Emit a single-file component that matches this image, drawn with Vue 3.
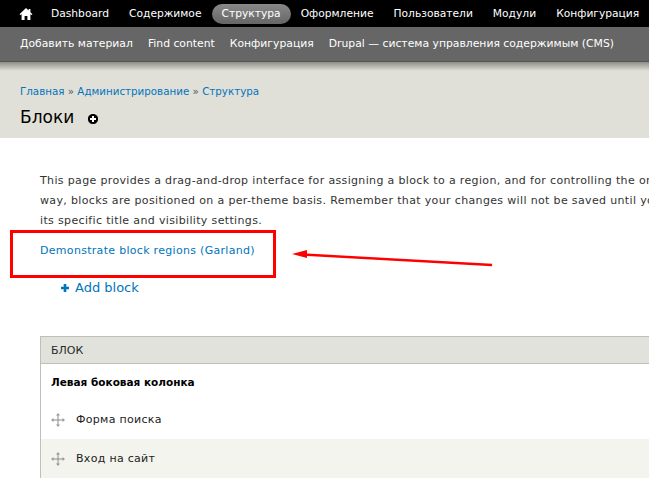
<script setup>
const topItems = [
  { label: 'Dashboard' },
  { label: 'Содержимое' },
  { label: 'Структура', active: true },
  { label: 'Оформление' },
  { label: 'Пользователи' },
  { label: 'Модули' },
  { label: 'Конфигурация' },
]
const shortcuts = ['Добавить материал', 'Find content', 'Конфигурация', 'Drupal — система управления содержимым (CMS)']
const rows = [
  { label: 'Форма поиска', even: false },
  { label: 'Вход на сайт', even: true },
]
</script>

<template>
  <div class="page">
    <nav class="toolbar">
      <svg class="home" width="16" height="14" viewBox="0 0 16 14">
        <path d="M8 1 L1.5 7.2 L2.6 8 L3.6 7.2 V13 H6.6 V9 H9.4 V13 H12.4 V7.2 L13.4 8 L14.5 7.2 L12.4 5.2 V2 H10.6 V3.5 Z" fill="#fff" />
      </svg>
      <a v-for="item in topItems" :key="item.label" class="top-link" :class="{ active: item.active }">{{ item.label }}</a>
    </nav>
    <nav class="shortcuts">
      <a v-for="s in shortcuts" :key="s" class="shortcut">{{ s }}</a>
    </nav>
    <header class="head">
      <div class="crumbs"><a>Главная</a> » <a>Администрирование</a> » <a>Структура</a></div>
      <div class="title-row">
        <h1>Блоки</h1>
        <svg width="12" height="12" viewBox="0 0 12 12">
          <circle cx="6" cy="6" r="5.6" fill="#000" stroke="#fff" stroke-width="0.8" />
          <path d="M6 3 V9 M3 6 H9" stroke="#fff" stroke-width="2" />
        </svg>
      </div>
    </header>
    <main class="content">
      <div class="help">
        <p>This page provides a drag-and-drop interface for assigning a block to a region, and for controlling the order of blocks within regions.</p>
        <p>way, blocks are positioned on a per-theme basis. Remember that your changes will not be saved until you click the Save blocks button.</p>
        <p>its specific title and visibility settings.</p>
      </div>
      <div class="callout">
        <a class="demo">Demonstrate block regions (Garland)</a>
        <svg class="arrow" width="210" height="36" viewBox="0 0 210 36">
          <path d="M13 12.5 L202 23" stroke="#f00" stroke-width="2.4" fill="none" />
          <path d="M2 12 L17 8 L17 16 Z" fill="#f00" />
        </svg>
      </div>
      <a class="add">
        <svg width="10" height="10" viewBox="0 0 10 10"><path d="M5 1 V9 M1 5 H9" stroke="#0074bd" stroke-width="2.6" /></svg>
        Add block
      </a>
      <table class="blocks">
        <thead><tr><th>БЛОК</th></tr></thead>
        <tbody>
          <tr class="region"><td>Левая боковая колонка</td></tr>
          <tr v-for="row in rows" :key="row.label" class="row" :class="{ even: row.even }">
            <td>
              <span class="row-inner">
                <svg width="14" height="14" viewBox="0 0 14 14">
                  <path d="M7 1 V13 M1 7 H13" stroke="#8c8c8c" stroke-width="1" />
                  <path d="M7 0 L9 2.5 H5 Z M7 14 L5 11.5 H9 Z M0 7 L2.5 5 V9 Z M14 7 L11.5 9 V5 Z" fill="#9a9a9a" />
                </svg>
                <span>{{ row.label }}</span>
              </span>
            </td>
          </tr>
        </tbody>
      </table>
    </main>
  </div>
</template>

<style>
html, body { margin: 0; overflow: hidden; background: #fff; }
</style>

<style scoped>
.page {
  width: 649px;
  height: 480px;
  overflow: hidden;
  font-family: "DejaVu Sans", sans-serif;
  font-size: 11px;
  color: #333;
  position: relative;
}
a { color: #0074bd; }
.toolbar {
  height: 27px;
  background: #000;
  display: flex;
  align-items: center;
  white-space: nowrap;
  padding-left: 18px;
  box-sizing: border-box;
}
.home { margin-right: 7px; flex: none; }
.top-link {
  color: #fff;
  font-size: 10.7px;
  padding: 3px 10px;
  line-height: 14px;
  border-radius: 10px;
  flex: none;
}
.top-link.active { background: linear-gradient(#888, #666); }
.shortcuts {
  height: 35px;
  background: #666;
  display: flex;
  align-items: center;
  gap: 15px;
  padding: 0 0 2px 20px;
  box-sizing: border-box;
  white-space: nowrap;
  border-bottom: 1px solid #555;
}
.shortcut { color: #fff; font-size: 10.8px; flex: none; }
.head {
  height: 76px;
  background: linear-gradient(#8e8e88 0, #e0e0d8 9px);
  padding: 21px 20px 0;
  box-sizing: border-box;
}
.crumbs { font-size: 10.3px; line-height: 16px; color: #555; }
.title-row { display: flex; align-items: center; gap: 13px; margin-top: 6px; height: 24px; }
h1 { margin: 0; font-weight: 400; font-size: 17px; color: #000; font-family: "DejaVu Sans", sans-serif; }
.title-row svg { margin-top: 3px; }
.content { padding: 33px 0 0 40px; }
.help { white-space: nowrap; line-height: 20px; font-size: 11px; letter-spacing: 0.35px; }
.help p { margin: 0; }
.callout {
  position: relative;
  margin: -1px 0 0 -30px;
  height: 48px;
  width: 266px;
  border: 3px solid #f00;
  box-sizing: border-box;
  padding: 0 0 0 27px;
}
.demo { line-height: 36px; font-size: 11px; letter-spacing: 0.3px; display: block; white-space: nowrap; }
.arrow { position: absolute; left: 277px; top: 9px; }
.add {
  display: flex;
  align-items: center;
  gap: 5px;
  font-size: 13px;
  margin: 1px 0 0 20px;
  line-height: 18px;
}
.blocks {
  margin-top: 39px;
  width: 700px;
  border-collapse: collapse;
  border-left: 1px solid #bebfb9;
}
th {
  background: #e1e2dc;
  border-top: 1px solid #bebfb9;
  border-bottom: 1px solid #bebfb9;
  text-align: left;
  font-weight: 400;
  font-size: 11px;
  color: #27292b;
  height: 26px;
  padding: 0 0 0 10px;
}
.region td { font-weight: 700; color: #000; height: 36px; padding: 0 0 0 10px; font-size: 10.5px; }
.row td { height: 39px; padding: 0 0 0 10px; color: #222; font-size: 11px; letter-spacing: 0.3px; }
.row.even td { background: #f3f4ee; }
.row-inner { display: flex; align-items: center; gap: 11px; }
</style>
